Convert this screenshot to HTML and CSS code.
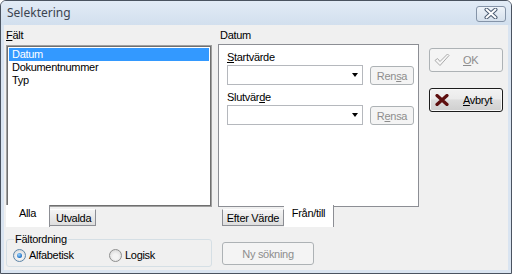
FILE: index.html
```html
<!DOCTYPE html>
<html>
<head>
<meta charset="utf-8">
<link rel="stylesheet" href="styles.css">
</head>
<body>
<div class="window">
  <div class="titlebar">
    <span class="title">Selektering</span>
    <div class="close">
      <svg width="14" height="11" viewBox="0 0 14 11"><path d="M2.5 1.5 L11.5 9.5 M11.5 1.5 L2.5 9.5" stroke="#4c5c72" stroke-width="4" stroke-linecap="round"/><path d="M2.5 1.5 L11.5 9.5 M11.5 1.5 L2.5 9.5" stroke="#fff" stroke-width="2" stroke-linecap="round"/></svg>
    </div>
  </div>
  <div class="client">
    <div class="col-left">
      <div class="label"><u>F</u>ält</div>
      <div class="listbox">
        <div class="item selected">Datum</div>
        <div class="item">Dokumentnummer</div>
        <div class="item">Typ</div>
      </div>
      <div class="tabs tabs-left">
        <div class="tab active tab-alla">Alla</div>
        <div class="tab tab-utvalda">Utvalda</div>
      </div>
      <div class="group">
        <span class="legend">Fältordning</span>
        <div class="radios">
          <div class="radio-item"><span class="radio checked"></span><span>Alfabetisk</span></div>
          <div class="radio-item"><span class="radio"></span><span>Logisk</span></div>
        </div>
      </div>
    </div>
    <div class="col-mid">
      <div class="label label-mid">Datum</div>
      <div class="panel">
        <div class="field-label"><u>S</u>tartvärde</div>
        <div class="field-row">
          <div class="combo"><span class="arrow"></span></div>
          <div class="btn disabled rensa">Ren<u>s</u>a</div>
        </div>
        <div class="field-label field-label-2">Slutvär<u>d</u>e</div>
        <div class="field-row">
          <div class="combo"><span class="arrow"></span></div>
          <div class="btn disabled rensa">R<u>e</u>nsa</div>
        </div>
      </div>
      <div class="tabs tabs-mid">
        <div class="tab tab-efter">Efter Värde</div>
        <div class="tab active tab-fran">Från/till</div>
      </div>
      <div class="btn disabled nysok">Ny sökning</div>
    </div>
    <div class="col-right">
      <div class="btn disabled big ok">
        <svg class="icon" width="16" height="14" viewBox="0 0 16 14"><path d="M1 7.5 L3.5 5.5 L6 8.5 L13.5 1 L15 2.5 L6 12.5 Z" fill="#f6f6f6" stroke="#a9a9a9" stroke-width="1" stroke-linejoin="round"/></svg>
        <span class="btn-text"><u>O</u>K</span>
      </div>
      <div class="btn big default cancel">
        <svg class="icon" width="14" height="12" viewBox="0 0 14 12"><path d="M2 1.5 L12 10.5 M12 1.5 L2 10.5" stroke="#5e0f0f" stroke-width="3.2" stroke-linecap="round"/></svg>
        <span class="btn-text"><u>A</u>vbryt</span>
      </div>
    </div>
  </div>
</div>
</body>
</html>
```
FILE: styles.css
```css
* { box-sizing: border-box; margin: 0; padding: 0; }
html, body { width: 512px; height: 274px; overflow: hidden; }
body {
  font-family: "Liberation Sans", Arial, sans-serif;
  font-size: 11px;
  letter-spacing: -0.3px;
  color: #000;
  background: #ffffff;
}
u { text-decoration: underline; text-underline-offset: 1px; }

.window {
  width: 512px;
  height: 274px;
  border: 1px solid #4a5360;
  border-radius: 6px 6px 0 0;
  background: #d9e4f1;
  display: flex;
  flex-direction: column;
  overflow: hidden;
}
.titlebar {
  height: 24px;
  flex: none;
  display: flex;
  align-items: center;
  justify-content: space-between;
  padding: 0 5px 0 6px;
  background: linear-gradient(#e2ebf6, #d2dfee);
}
.title {
  font-family: "Noto Sans", "Open Sans", sans-serif;
  font-size: 12px;
  letter-spacing: 0;
  color: #3c4450;
  margin-top: -1px;
}
.close {
  width: 30px;
  height: 16px;
  margin-top: 1px;
  border: 1px solid #8594a8;
  border-radius: 3px;
  background: linear-gradient(#eef3f9, #d5e0ec);
  display: flex;
  align-items: center;
  justify-content: center;
}

.client {
  flex: 1;
  margin: 0 3px 3px 3px;
  background: #f0f0f0;
  display: flex;
  padding: 0 4px 0 2px;
}
.label { height: 13px; line-height: 13px; }

/* left column */
.col-left { width: 206px; padding-top: 4px; display: flex; flex-direction: column; }
.listbox {
  margin-top: 3px;
  height: 162px;
  background: #fff;
  border: 1px solid #a0a0a0;
  box-shadow: inset 0 0 0 1px #6f6f6f;
  padding: 2px;
}
.item { height: 13px; line-height: 13px; padding-left: 3px; }
.item.selected { background: #3399ff; color: #fff; }

.tabs { display: flex; align-items: flex-start; margin-top: -2px; height: 22px; position: relative; }
.tab { height: 22px; line-height: 13px; text-align: center; }
.tab.active { background: #fff; padding-top: 2px; border-right: 1px solid #8c8e94; }
.tab:not(.active) {
  margin-top: 4px;
  height: 17px;
  padding-top: 2px;
  background: linear-gradient(#f4f4f4, #dedede);
  border-top: 1px solid #fdfdfd;
  border-right: 1px solid #8c8e94;
  border-bottom: 1px solid #8c8e94;
}
.tab-alla { width: 44px; }
.tab-utvalda { width: 46px; padding-left: 6px; text-align: left; }

.group {
  position: relative;
  margin-top: 12px;
  height: 28px;
  border: 1px solid #d5dfe5;
  border-radius: 3px;
  padding: 9px 6px 0 6px;
}
.legend {
  position: absolute;
  top: -7px;
  left: 7px;
  padding: 0 1px;
  background: #f0f0f0;
  line-height: 13px;
}
.radios { display: flex; }
.radio-item { width: 98px; display: flex; align-items: center; gap: 3px; height: 13px; line-height: 13px; }
.radio {
  width: 13px; height: 13px; flex: none;
  border-radius: 50%;
  border: 1px solid #8e8f8f;
  background: radial-gradient(circle at 50% 60%, #f4f4f4 30%, #d0d0d0 100%);
  position: relative;
}
.radio.checked { border-color: #5d85a8; }
.radio.checked::after {
  content: "";
  position: absolute;
  left: 3px; top: 3px;
  width: 5px; height: 5px;
  border-radius: 50%;
  background: radial-gradient(circle at 40% 35%, #9fd6ff, #1c6fc4 70%, #0d4f9a);
}

/* middle column */
.col-mid { width: 201px; margin-left: 6px; padding-top: 4px; display: flex; flex-direction: column; }
.label-mid { padding-left: 2px; }
.panel {
  margin-top: 2px;
  height: 163px;
  background: #fff;
  border: 1px solid #8c8e94;
  padding: 6px 0 0 8px;
}
.field-label { height: 13px; line-height: 13px; }
.field-label-2 { margin-top: 6px; }
.field-row { display: flex; align-items: center; margin-top: 1px; height: 20px; }
.combo {
  width: 136px;
  height: 20px;
  border: 1px solid #b5b8bd;
  background: #fff;
  display: flex;
  align-items: center;
  justify-content: flex-end;
  padding-right: 4px;
}
.arrow {
  width: 0; height: 0;
  border-left: 3.5px solid transparent;
  border-right: 3.5px solid transparent;
  border-top: 4px solid #000;
}
.btn {
  display: flex;
  align-items: center;
  justify-content: center;
  border-radius: 3px;
}
.btn.disabled {
  border: 1px solid #adb2b5;
  background: #f4f4f4;
  color: #8d8d8d;
}
.rensa { width: 44px; height: 19px; margin-left: 7px; margin-top: 1px; }
.tabs-mid { padding-left: 4px; }
.tab-efter { width: 62px; border-left: 1px solid #8c8e94; }
.tab-fran { width: 50px; }
.nysok { width: 92px; height: 23px; margin-top: 15px; margin-left: 4px; }

/* right column */
.col-right { width: 74px; margin-left: 10px; display: flex; flex-direction: column; }
.btn.big { height: 24px; justify-content: flex-start; padding-left: 4px; }
.ok { margin-top: 23px; }
.ok .btn-text { margin-left: 13px; }
.cancel {
  margin-top: 16px;
  border: 1px solid #1c1c1c;
  background: linear-gradient(#f2f2f2 0%, #ebebeb 45%, #dddddd 50%, #cfcfcf 100%);
  box-shadow: inset 0 0 0 1px #f8f8f8;
}
.cancel .icon { margin-left: 1px; }
.cancel .btn-text { margin-left: 14px; }
.icon { flex: none; }
```
